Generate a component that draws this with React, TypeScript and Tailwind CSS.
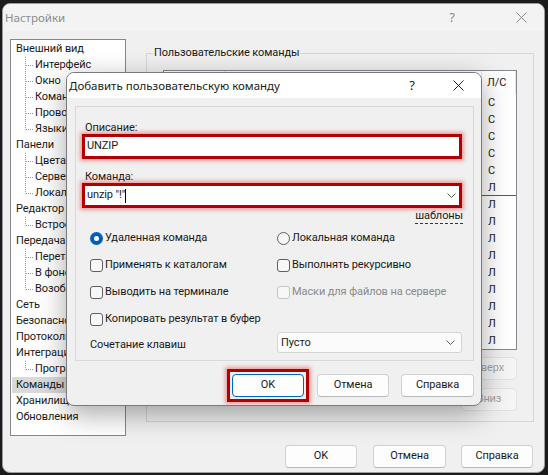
import React from 'react';

type TreeItem = { label: string; level: 0 | 1; last?: boolean; selected?: boolean };

const tree: TreeItem[] = [
  { label: 'Внешний вид', level: 0 },
  { label: 'Интерфейс', level: 1 },
  { label: 'Окно', level: 1 },
  { label: 'Командир', level: 1 },
  { label: 'Проводник', level: 1 },
  { label: 'Языки', level: 1, last: true },
  { label: 'Панели', level: 0 },
  { label: 'Цвета', level: 1 },
  { label: 'Серверная', level: 1 },
  { label: 'Локальная', level: 1, last: true },
  { label: 'Редактор', level: 0 },
  { label: 'Встроенный редактор', level: 1, last: true },
  { label: 'Передача', level: 0 },
  { label: 'Перетаскивание', level: 1 },
  { label: 'В фоновом режиме', level: 1 },
  { label: 'Возобновление', level: 1, last: true },
  { label: 'Сеть', level: 0 },
  { label: 'Безопасность', level: 0 },
  { label: 'Протоколирование', level: 0 },
  { label: 'Интеграция', level: 0 },
  { label: 'Программы', level: 1, last: true },
  { label: 'Команды', level: 0, selected: true },
  { label: 'Хранилище', level: 0 },
  { label: 'Обновления', level: 0 },
];

const sides = ['С', 'С', 'С', 'С', 'С', 'Л', 'Л', 'Л', 'Л', 'Л', 'Л', 'Л', 'Л', 'Л', 'Л'];

function CloseIcon({ className }: { className?: string }) {
  return (
    <svg width="11" height="11" viewBox="0 0 11 11" className={className}>
      <path d="M0.5 0.5 L10.5 10.5 M10.5 0.5 L0.5 10.5" stroke="currentColor" strokeWidth="1" fill="none" />
    </svg>
  );
}

function Chevron() {
  return (
    <svg width="9" height="5" viewBox="0 0 9 5" className="text-[#5a5a5a]">
      <path d="M0.5 0.5 L4.5 4.5 L8.5 0.5" stroke="currentColor" strokeWidth="1" fill="none" />
    </svg>
  );
}

function Connector({ last }: { last?: boolean }) {
  return (
    <svg width="24" height="16" className="shrink-0">
      <line x1="14.5" y1="0" x2="14.5" y2={last ? 8.5 : 16} stroke="#9a9a9a" strokeDasharray="1 1" />
      <line x1="15" y1="8.5" x2="23" y2="8.5" stroke="#9a9a9a" strokeDasharray="1 1" />
    </svg>
  );
}

function Btn({ children, className = '' }: { children: React.ReactNode; className?: string }) {
  return (
    <div
      className={`h-[23px] flex items-center justify-center rounded-[4px] border border-[#d0d0d0] border-b-[#b8b8b8] bg-[#fdfdfd] ${className}`}
    >
      {children}
    </div>
  );
}

function Option({
  label,
  radio,
  checked,
  disabled,
}: {
  label: string;
  radio?: boolean;
  checked?: boolean;
  disabled?: boolean;
}) {
  let box: React.ReactNode;
  if (radio && checked) {
    box = (
      <span className="w-[13px] h-[13px] shrink-0 rounded-full bg-[#005fb8] flex items-center justify-center">
        <span className="w-[5px] h-[5px] rounded-full bg-white" />
      </span>
    );
  } else if (radio) {
    box = <span className="w-[13px] h-[13px] shrink-0 rounded-full border border-[#5f5f5f] bg-[#f6f6f6]" />;
  } else {
    box = (
      <span
        className={`w-[13px] h-[13px] shrink-0 rounded-[3px] border bg-[#f7f7f7] ${
          disabled ? 'border-[#c6c6c6]' : 'border-[#5f5f5f]'
        }`}
      />
    );
  }
  return (
    <div className={`flex items-center gap-[2px] h-[20px] whitespace-nowrap ${disabled ? 'text-[#8a8a8a]' : ''}`}>
      {box}
      <span>{label}</span>
    </div>
  );
}

function MainWindow() {
  return (
    <div className="w-[543px] h-[470px] rounded-[8px] border border-[#9c9c9c] bg-[#f0f0f0] flex flex-col overflow-hidden">
      <div className="h-[27px] shrink-0 flex items-center bg-[#f3f3f3] text-[#8c8c8c] pl-[2px] font-['Noto_Sans',sans-serif] text-[11.5px] tracking-normal">
        <span>Настройки</span>
        <span className="ml-auto w-[46px] text-center text-[13px]">?</span>
        <span className="w-[23px]" />
        <span className="w-[46px] flex justify-center">
          <CloseIcon />
        </span>
      </div>
      <div className="flex-1 flex flex-col">
        <div className="flex items-start pt-[8px] pl-[7px]">
          <div className="w-[116px] h-[397px] border border-[#828790] bg-white pt-px overflow-hidden">
            {tree.map((t) => (
              <div
                key={t.label + t.level}
                className={`h-[16px] flex items-center whitespace-nowrap leading-[16px] ${
                  t.selected ? 'bg-[#d9d9d9] ml-px' : ''
                } ${t.level === 0 ? (t.selected ? 'pl-[4px]' : 'pl-[5px]') : ''}`}
              >
                {t.level === 1 && <Connector last={t.last} />}
                <span>{t.label}</span>
              </div>
            ))}
          </div>
          <fieldset className="ml-[20px] mt-[6px] w-[388px] h-[377px] border border-[#d6d6d6] flex flex-col">
            <legend className="ml-[6px] px-px leading-[16px]">Пользовательские команды</legend>
            <div className="flex flex-col px-[16px] mt-[9px]">
              <div className="h-[280px] border border-[#828790] bg-white flex flex-col overflow-hidden">
                <div className="h-[23px] shrink-0 flex">
                  <div className="w-[61px] border-r border-[#e5e5e5] pl-[5px] leading-[23px]">Имя</div>
                  <div className="w-[257px] border-r border-[#e5e5e5] pl-[5px] leading-[23px]">Команда</div>
                  <div className="flex-1 pl-[5px] leading-[23px] border-r border-[#e5e5e5]">Л/С</div>
                </div>
                {sides.map((s, i) => (
                  <div key={i} className={`h-[17px] shrink-0 flex leading-[17px] ${i === 5 ? 'border-b border-[#5a5a5a]' : ''}`}>
                    <div className="w-[319px]" />
                    <div className="flex-1 pl-[5px]">{s}</div>
                  </div>
                ))}
              </div>
              <div className="flex flex-col items-end text-[#a3a3a3]">
                <div className="mt-[7px] w-[56px] h-[23px] rounded-[4px] border border-[#e2e2e2] bg-[#f5f5f5] flex items-center justify-center">
                  Вверх
                </div>
                <div className="mt-[8px] w-[56px] h-[23px] rounded-[4px] border border-[#e2e2e2] bg-[#f5f5f5] flex items-center justify-center">
                  Вниз
                </div>
              </div>
            </div>
          </fieldset>
        </div>
        <div className="flex justify-end pr-[11px] mt-[9px]">
          <Btn className="w-[72px]">OK</Btn>
          <Btn className="w-[73px] ml-[16px]">Отмена</Btn>
          <Btn className="w-[72px] ml-[15px]">Справка</Btn>
        </div>
      </div>
    </div>
  );
}

function AddCommandDialog() {
  return (
    <div className="absolute left-[66px] top-[72px] w-[416px] h-[334px] rounded-[8px] border border-[#7a7a7a] bg-[#f0f0f0] shadow-[0_8px_28px_rgba(0,0,0,0.35)] flex flex-col overflow-hidden">
      <div className="h-[25px] shrink-0 bg-white flex items-center pl-[2px] font-['Noto_Sans',sans-serif] text-[11.5px] tracking-normal">
        <span>Добавить пользовательскую команду</span>
        <span className="ml-auto w-[46px] text-center text-[13px]">?</span>
        <span className="w-[46px] flex justify-center">
          <CloseIcon />
        </span>
      </div>
      <div className="ml-[8px] mt-[8px] w-[399px] h-[255px] border border-[#d9d9d9] pl-[6px] flex flex-col">
        <div className="mt-[15px] pl-[3px] leading-[12px]">Описание:</div>
        <div className="w-[380px] h-[25px] border-[3px] border-[#b00000] shadow-[0_0_4px_2px_rgba(220,0,0,0.35)] bg-white flex items-center pl-[2px]">
          UNZIP
        </div>
        <div className="mt-[12px] pl-[3px] leading-[12px]">Команда:</div>
        <div className="w-[380px] h-[25px] border-[3px] border-[#b00000] shadow-[0_0_4px_2px_rgba(220,0,0,0.35)] bg-white flex items-center pl-[2px] pr-[3px]">
          <span className="whitespace-pre">unzip "!"</span>
          <span className="w-px h-[14px] bg-black" />
          <span className="ml-auto">
            <Chevron />
          </span>
        </div>
        <div className="mt-[1px] self-end mr-[10px] leading-[14px] border-b border-dashed border-[#333]">шаблоны</div>
        <div className="mt-[4px] pl-[8px] grid grid-cols-[187px_1fr] gap-y-[7px]">
          <Option label="Удаленная команда" radio checked />
          <Option label="Локальная команда" radio />
          <Option label="Применять к каталогам" />
          <Option label="Выполнять рекурсивно" />
          <Option label="Выводить на терминале" />
          <Option label="Маски для файлов на сервере" disabled />
          <Option label="Копировать результат в буфер" />
          <div />
        </div>
        <div className="mt-[3px] pl-[8px] flex items-center">
          <span className="w-[187px] pt-[5px]">Сочетание клавиш</span>
          <div className="w-[185px] h-[21px] rounded-[3px] border border-[#d4d4d4] bg-[#fbfbfb] flex items-center pl-[3px] pr-[6px]">
            <span>Пусто</span>
            <span className="ml-auto">
              <Chevron />
            </span>
          </div>
        </div>
      </div>
      <div className="mt-[13px] flex items-center h-[23px] pl-[160px]">
        <div className="-my-[5px] border-[3px] border-[#b00000] shadow-[0_0_4px_2px_rgba(220,0,0,0.35)] p-[2px]">
          <div className="w-[72px] h-[23px] rounded-[4px] border border-[#0067c0] bg-[#fdfdfd] flex items-center justify-center">
            OK
          </div>
        </div>
        <Btn className="w-[72px] ml-[8px]">Отмена</Btn>
        <Btn className="w-[73px] ml-[12px]">Справка</Btn>
      </div>
    </div>
  );
}

export default function App() {
  return (
    <div className="relative w-[548px] h-[475px] overflow-hidden bg-[#1b1b1b] pt-[3px] pl-[2px] font-['Roboto',sans-serif] text-[11px] tracking-[-0.1px] text-[#1a1a1a]">
      <MainWindow />
      <AddCommandDialog />
    </div>
  );
}
